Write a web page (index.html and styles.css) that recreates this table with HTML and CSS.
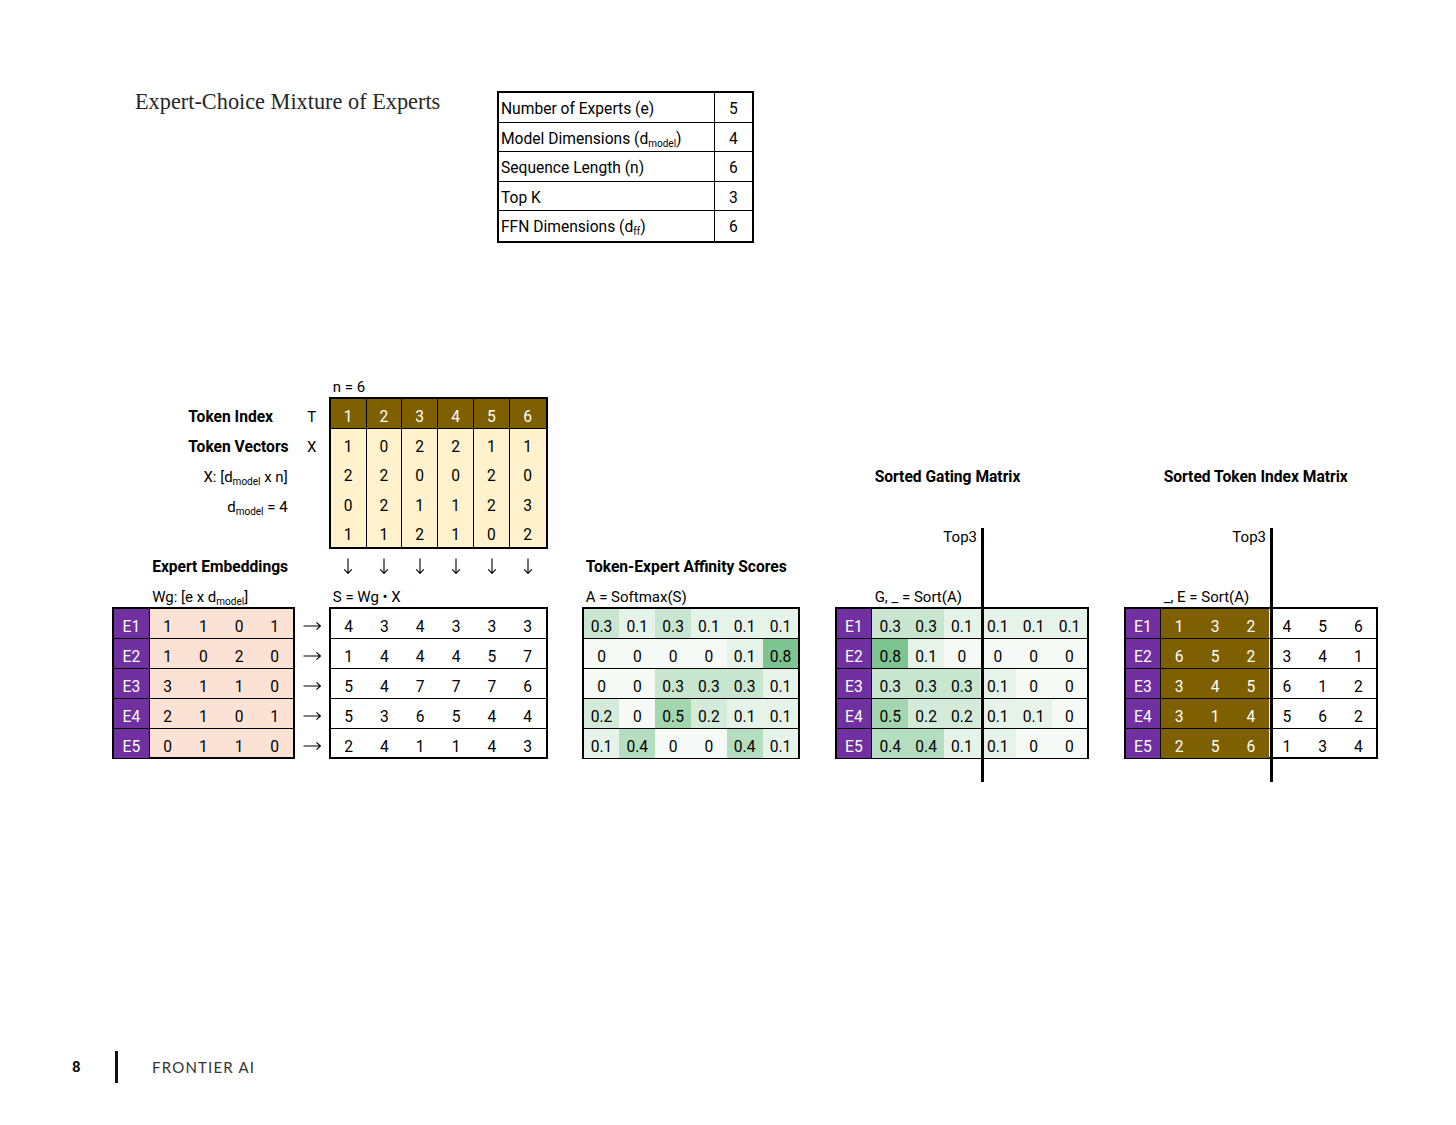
FILE: index.html
```html
<!DOCTYPE html>
<html lang="en">
<head>
<meta charset="utf-8">
<title>Expert-Choice Mixture of Experts</title>
<link rel="stylesheet" href="styles.css">
</head>
<body>
<div class="page">
  <header class="top">
    <h1 class="title">Expert-Choice Mixture of Experts</h1>
    <div class="params">
      <div class="pl">Number of Experts (e)</div><div class="pv">5</div>
      <div class="pl">Model Dimensions (d<sub>model</sub>)</div><div class="pv">4</div>
      <div class="pl">Sequence Length (n)</div><div class="pv">6</div>
      <div class="pl">Top K</div><div class="pv">3</div>
      <div class="pl">FFN Dimensions (d<sub>ff</sub>)</div><div class="pv">6</div>
    </div>
  </header>

  <section class="diagram">
    <div class="t n6">n = 6</div>
    <div class="t bold l-ti">Token Index</div>
    <div class="t sym s-t">T</div>
    <div class="t bold l-tv">Token Vectors</div>
    <div class="t sym s-x">X</div>
    <div class="t right l-xd">X: [d<sub>model</sub> x n]</div>
    <div class="t right l-dm">d<sub>model</sub> = 4</div>

    <div class="tbl tok">
      <div class="h">1</div><div class="h">2</div><div class="h">3</div><div class="h">4</div><div class="h">5</div><div class="h">6</div>
      <div>1</div><div>0</div><div>2</div><div>2</div><div>1</div><div>1</div>
      <div>2</div><div>2</div><div>0</div><div>0</div><div>2</div><div>0</div>
      <div>0</div><div>2</div><div>1</div><div>1</div><div>2</div><div>3</div>
      <div>1</div><div>1</div><div>2</div><div>1</div><div>0</div><div>2</div>
    </div>

    <div class="down">
      <span><svg class="ad" viewBox="0 0 10 16"><path d="M5 0.5V15.2M1.2 11.4L5 15.4L8.8 11.4"/></svg></span>
      <span><svg class="ad" viewBox="0 0 10 16"><path d="M5 0.5V15.2M1.2 11.4L5 15.4L8.8 11.4"/></svg></span>
      <span><svg class="ad" viewBox="0 0 10 16"><path d="M5 0.5V15.2M1.2 11.4L5 15.4L8.8 11.4"/></svg></span>
      <span><svg class="ad" viewBox="0 0 10 16"><path d="M5 0.5V15.2M1.2 11.4L5 15.4L8.8 11.4"/></svg></span>
      <span><svg class="ad" viewBox="0 0 10 16"><path d="M5 0.5V15.2M1.2 11.4L5 15.4L8.8 11.4"/></svg></span>
      <span><svg class="ad" viewBox="0 0 10 16"><path d="M5 0.5V15.2M1.2 11.4L5 15.4L8.8 11.4"/></svg></span>
    </div>

    <div class="t bold l-ee">Expert Embeddings</div>
    <div class="t l-wg">Wg: [e x d<sub>model</sub>]</div>
    <div class="t l-s">S = Wg • X</div>

    <div class="tbl wg">
      <div class="e">E1</div><div>1</div><div>1</div><div>0</div><div>1</div>
      <div class="e">E2</div><div>1</div><div>0</div><div>2</div><div>0</div>
      <div class="e">E3</div><div>3</div><div>1</div><div>1</div><div>0</div>
      <div class="e">E4</div><div>2</div><div>1</div><div>0</div><div>1</div>
      <div class="e">E5</div><div>0</div><div>1</div><div>1</div><div>0</div>
    </div>

    <div class="rarrows">
      <span><svg class="ar" viewBox="0 0 18 10"><path d="M0.5 5H17.2M13.4 1.4L17.4 5L13.4 8.6"/></svg></span>
      <span><svg class="ar" viewBox="0 0 18 10"><path d="M0.5 5H17.2M13.4 1.4L17.4 5L13.4 8.6"/></svg></span>
      <span><svg class="ar" viewBox="0 0 18 10"><path d="M0.5 5H17.2M13.4 1.4L17.4 5L13.4 8.6"/></svg></span>
      <span><svg class="ar" viewBox="0 0 18 10"><path d="M0.5 5H17.2M13.4 1.4L17.4 5L13.4 8.6"/></svg></span>
      <span><svg class="ar" viewBox="0 0 18 10"><path d="M0.5 5H17.2M13.4 1.4L17.4 5L13.4 8.6"/></svg></span>
    </div>

    <div class="tbl st">
      <div>4</div><div>3</div><div>4</div><div>3</div><div>3</div><div>3</div>
      <div>1</div><div>4</div><div>4</div><div>4</div><div>5</div><div>7</div>
      <div>5</div><div>4</div><div>7</div><div>7</div><div>7</div><div>6</div>
      <div>5</div><div>3</div><div>6</div><div>5</div><div>4</div><div>4</div>
      <div>2</div><div>4</div><div>1</div><div>1</div><div>4</div><div>3</div>
    </div>

    <div class="t bold l-af">Token-Expert Affinity Scores</div>
    <div class="t l-a">A = Softmax(S)</div>

    <div class="tbl at">
      <div class="g3">0.3</div><div class="g1">0.1</div><div class="g3">0.3</div><div class="g1">0.1</div><div class="g1">0.1</div><div class="g1">0.1</div>
      <div class="g0">0</div><div class="g0">0</div><div class="g0">0</div><div class="g0">0</div><div class="g1">0.1</div><div class="g8">0.8</div>
      <div class="g0">0</div><div class="g0">0</div><div class="g3">0.3</div><div class="g3">0.3</div><div class="g3">0.3</div><div class="g1">0.1</div>
      <div class="g2">0.2</div><div class="g0">0</div><div class="g5">0.5</div><div class="g2">0.2</div><div class="g1">0.1</div><div class="g1">0.1</div>
      <div class="g1">0.1</div><div class="g4">0.4</div><div class="g0">0</div><div class="g0">0</div><div class="g4">0.4</div><div class="g1">0.1</div>
    </div>

    <div class="t bold l-sg">Sorted Gating Matrix</div>
    <div class="t right top3 top3-a">Top3</div>
    <div class="t l-g">G, _ = Sort(A)</div>

    <div class="tbl gt">
      <div class="e">E1</div><div class="g3">0.3</div><div class="g3">0.3</div><div class="g1">0.1</div><div class="g1">0.1</div><div class="g1">0.1</div><div class="g1">0.1</div>
      <div class="e">E2</div><div class="g8">0.8</div><div class="g1">0.1</div><div class="g0">0</div><div class="g0">0</div><div class="g0">0</div><div class="g0">0</div>
      <div class="e">E3</div><div class="g3">0.3</div><div class="g3">0.3</div><div class="g3">0.3</div><div class="g1">0.1</div><div class="g0">0</div><div class="g0">0</div>
      <div class="e">E4</div><div class="g5">0.5</div><div class="g2">0.2</div><div class="g2">0.2</div><div class="g1">0.1</div><div class="g1">0.1</div><div class="g0">0</div>
      <div class="e">E5</div><div class="g4">0.4</div><div class="g4">0.4</div><div class="g1">0.1</div><div class="g1">0.1</div><div class="g0">0</div><div class="g0">0</div>
    </div>

    <div class="t bold l-si">Sorted Token Index Matrix</div>
    <div class="t right top3 top3-b">Top3</div>
    <div class="t l-e">_, E = Sort(A)</div>

    <div class="tbl it">
      <div class="e">E1</div><div class="b">1</div><div class="b">3</div><div class="b">2</div><div>4</div><div>5</div><div>6</div>
      <div class="e">E2</div><div class="b">6</div><div class="b">5</div><div class="b">2</div><div>3</div><div>4</div><div>1</div>
      <div class="e">E3</div><div class="b">3</div><div class="b">4</div><div class="b">5</div><div>6</div><div>1</div><div>2</div>
      <div class="e">E4</div><div class="b">3</div><div class="b">1</div><div class="b">4</div><div>5</div><div>6</div><div>2</div>
      <div class="e">E5</div><div class="b">2</div><div class="b">5</div><div class="b">6</div><div>1</div><div>3</div><div>4</div>
    </div>

    <div class="cut cut-a"></div>
    <div class="cut cut-b"></div>
  </section>

  <footer class="foot">
    <span class="pg">8</span>
    <span class="bar"></span>
    <span class="brand">FRONTIER AI</span>
  </footer>
</div>
</body>
</html>
```
FILE: styles.css
```css
* { box-sizing: border-box; }

body {
  margin: 0;
  background: #fff;
  color: #000;
  font-family: Roboto, "Liberation Sans", Arial, sans-serif;
  font-size: 15px;
}

.page {
  width: 1456px;
  height: 1125px;
  overflow: hidden;
}

sub {
  font-size: 10px;
  line-height: 0;
  vertical-align: -3px;
}

/* ---------- header ---------- */
.top {
  display: flex;
  align-items: flex-start;
  padding: 91px 0 0 135px;
}

.title {
  margin: 0;
  width: 362px;
  flex: none;
  font-family: "Liberation Serif", "Times New Roman", serif;
  font-weight: normal;
  font-size: 22.3px;
  line-height: 22px;
  color: #262626;
}

.params {
  display: grid;
  grid-template-columns: 1fr 37px;
  grid-auto-rows: 29.6px;
  width: 257px;
  border: 2px solid #000;
  font-size: 15.6px;
}

.pl, .pv {
  padding-top: 5px;
  line-height: 22px;
  white-space: nowrap;
  border-bottom: 1px solid #000;
}

.pl {
  padding-left: 2px;
  border-right: 1px solid #000;
}

.pv { text-align: center; }

.params > :nth-last-child(-n+2) { border-bottom: 0; }

/* ---------- diagram ---------- */
.diagram {
  display: grid;
  grid-template-columns: repeat(35, 36.14px);
  grid-template-rows: repeat(14, 30px);
  margin: 125px 0 0 113px;
}

.t {
  padding-top: 8px;
  line-height: 22px;
  white-space: nowrap;
  padding-left: 3px;
}

.bold { font-weight: bold; font-size: 15.6px; }
.right { text-align: right; padding-left: 0; padding-right: 6px; }
.sym { text-align: center; padding-left: 0; }

.n6   { grid-column: 7 / 10;  grid-row: 1; }
.l-ti { grid-column: 3 / 6;   grid-row: 2; }
.s-t  { grid-column: 6;       grid-row: 2; }
.l-tv { grid-column: 3 / 6;   grid-row: 3; }
.s-x  { grid-column: 6;       grid-row: 3; }
.l-xd { grid-column: 1 / 6;   grid-row: 4; }
.l-dm { grid-column: 1 / 6;   grid-row: 5; }
.l-ee { grid-column: 2 / 7;   grid-row: 7; }
.l-wg { grid-column: 2 / 7;   grid-row: 8; }
.l-s  { grid-column: 7 / 13;  grid-row: 8; }
.l-af { grid-column: 14 / 21; grid-row: 7; }
.l-a  { grid-column: 14 / 20; grid-row: 8; }
.l-sg { grid-column: 22 / 28; grid-row: 4; }
.l-g  { grid-column: 22 / 28; grid-row: 8; }
.l-si { grid-column: 30 / 36; grid-row: 4; }
.l-e  { grid-column: 30 / 36; grid-row: 8; }

.top3 { padding-right: 3px; }
.top3-a { grid-column: 21 / 25; grid-row: 6; }
.top3-b { grid-column: 29 / 33; grid-row: 6; }

/* arrows */
.down {
  grid-column: 7 / 13;
  grid-row: 7;
  display: grid;
  grid-template-columns: repeat(6, 1fr);
}

.rarrows {
  grid-column: 6;
  grid-row: 9 / 14;
  display: grid;
  grid-template-rows: repeat(5, 1fr);
}

.down span, .rarrows span {
  display: flex;
  justify-content: center;
}

.down span { padding-top: 10px; }
.rarrows span { padding-top: 13px; }

.ad { width: 10px; height: 16px; }
.ar { width: 18px; height: 10px; }

.ad path, .ar path {
  fill: none;
  stroke: #000;
  stroke-width: 1.1;
}

/* ---------- tables ---------- */
.tbl {
  display: grid;
  margin: -1px;
  border: 2px solid #000;
  background: #fff;
  font-size: 15.6px;
}

.tbl > div {
  text-align: center;
  padding-top: 7px;
  line-height: 22px;
  white-space: nowrap;
}

.e {
  background: #7030a0;
  color: #fff;
  border-right: 1px solid #000;
}

.b {
  background: #7f6000;
  color: #fff;
}

.tok {
  grid-column: 7 / 13;
  grid-row: 2 / 7;
  grid-template-columns: repeat(6, 1fr);
  grid-template-rows: repeat(5, 1fr);
  background: #fff2cc;
}

.tok > div:not(:nth-child(6n)) { border-right: 1px solid #000; }
.tok > .h {
  background: #7f6000;
  color: #fff;
  border-bottom: 1px solid #000;
}

.wg {
  grid-column: 1 / 6;
  grid-row: 9 / 14;
  grid-template-columns: repeat(5, 1fr);
  grid-template-rows: repeat(5, 1fr);
  background: #fbe2d5;
}
.wg > div:nth-last-child(n+6) { border-bottom: 1px solid #000; }

.st {
  grid-column: 7 / 13;
  grid-row: 9 / 14;
  grid-template-columns: repeat(6, 1fr);
  grid-template-rows: repeat(5, 1fr);
}
.st > div:nth-last-child(n+7) { border-bottom: 1px solid #000; }

.at {
  grid-column: 14 / 20;
  grid-row: 9 / 14;
  grid-template-columns: repeat(6, 1fr);
  grid-template-rows: repeat(5, 1fr);
}
.at > div:nth-last-child(n+7) { border-bottom: 1px solid #000; }

.gt {
  grid-column: 21 / 28;
  grid-row: 9 / 14;
  grid-template-columns: repeat(7, 1fr);
  grid-template-rows: repeat(5, 1fr);
}
.gt > div:nth-last-child(n+8) { border-bottom: 1px solid #000; }

.it {
  grid-column: 29 / 36;
  grid-row: 9 / 14;
  grid-template-columns: repeat(7, 1fr);
  grid-template-rows: repeat(5, 1fr);
}
.it > div:nth-last-child(n+8) { border-bottom: 1px solid #000; }

/* green colour scale */
.g0 { background: #f5faf6; }
.g1 { background: #e5f3e8; }
.g2 { background: #d5ebda; }
.g3 { background: #c8e6cf; }
.g4 { background: #b5ddbf; }
.g5 { background: #a3d5af; }
.g8 { background: #7dc490; }

/* top-k cut lines */
.cut {
  grid-row: 6 / 15;
  justify-self: start;
  width: 3px;
  margin: 10px 0 6px 1px;
  background: #000;
}
.cut-a { grid-column: 25; }
.cut-b { grid-column: 33; }

/* ---------- footer ---------- */
.foot {
  display: flex;
  align-items: center;
  height: 32px;
  margin-top: 263px;
  padding-left: 72px;
}

.pg {
  width: 43px;
  font-weight: bold;
  font-size: 15px;
  color: #111;
}

.bar {
  width: 3px;
  height: 32px;
  background: #111;
  margin-right: 34px;
}

.brand {
  font-family: Lato, "Open Sans", sans-serif;
  font-weight: 400;
  font-size: 15px;
  letter-spacing: 1.2px;
  color: #333;
}
```
